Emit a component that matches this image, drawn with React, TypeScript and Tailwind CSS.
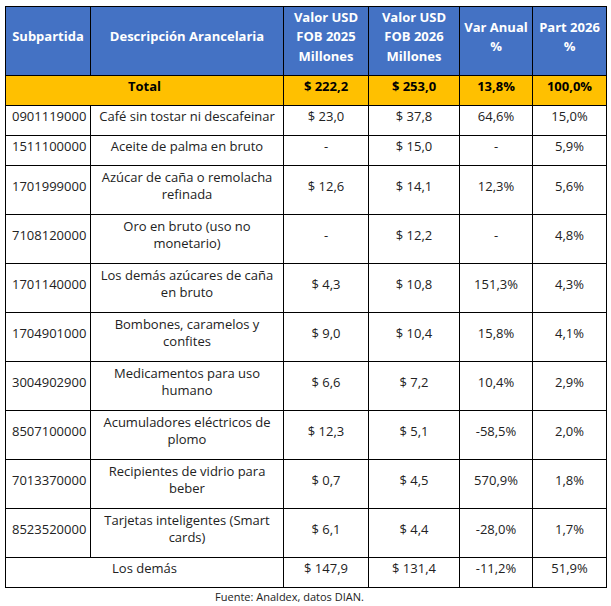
const rows: [string, string, string, string, string, string][] = [
  ['0901119000', 'Café sin tostar ni descafeinar', '$ 23,0', '$ 37,8', '64,6%', '15,0%'],
  ['1511100000', 'Aceite de palma en bruto', '-', '$ 15,0', '-', '5,9%'],
  ['1701999000', 'Azúcar de caña o remolacha refinada', '$ 12,6', '$ 14,1', '12,3%', '5,6%'],
  ['7108120000', 'Oro en bruto (uso no monetario)', '-', '$ 12,2', '-', '4,8%'],
  ['1701140000', 'Los demás azúcares de caña en bruto', '$ 4,3', '$ 10,8', '151,3%', '4,3%'],
  ['1704901000', 'Bombones, caramelos y confites', '$ 9,0', '$ 10,4', '15,8%', '4,1%'],
  ['3004902900', 'Medicamentos para uso humano', '$ 6,6', '$ 7,2', '10,4%', '2,9%'],
  ['8507100000', 'Acumuladores eléctricos de plomo', '$ 12,3', '$ 5,1', '-58,5%', '2,0%'],
  ['7013370000', 'Recipientes de vidrio para beber', '$ 0,7', '$ 4,5', '570,9%', '1,8%'],
  ['8523520000', 'Tarjetas inteligentes (Smart cards)', '$ 6,1', '$ 4,4', '-28,0%', '1,7%'],
];

// rows whose description wraps to two lines
const tall = new Set([2, 3, 4, 5, 6, 7, 8, 9]);

const th = 'border border-black px-1 pb-2 align-middle text-center font-bold leading-[19.5px]';
const td = 'border border-black px-1 pb-2 align-middle text-center leading-[17px]';

export default function App() {
  return (
    <div className="min-h-screen bg-white pl-[5px] pt-[6px] text-[13px] text-[#222]" style={{ fontFamily: '"Open Sans", "Liberation Sans", sans-serif' }}>
      <table className="w-[601px] table-fixed border-collapse">
        <colgroup>
          <col className="w-[85px]" />
          <col className="w-[193px]" />
          <col className="w-[85px]" />
          <col className="w-[91px]" />
          <col className="w-[73px]" />
          <col className="w-[74px]" />
        </colgroup>
        <thead>
          <tr className="h-[69px] bg-[#4472c4] text-white">
            <th className={th}>Subpartida</th>
            <th className={th}>Descripción Arancelaria</th>
            <th className={th}>Valor USD FOB 2025 Millones</th>
            <th className={th}>Valor USD FOB 2026 Millones</th>
            <th className={th}>Var Anual %</th>
            <th className={th}>Part 2026 %</th>
          </tr>
        </thead>
        <tbody>
          <tr className="h-[30px] bg-[#ffc000] font-bold text-black">
            <td className={td} colSpan={2}>Total</td>
            <td className={td}>$ 222,2</td>
            <td className={td}>$ 253,0</td>
            <td className={td}>13,8%</td>
            <td className={td}>100,0%</td>
          </tr>
          {rows.map((r, i) => (
            <tr key={r[0]} className={tall.has(i) ? 'h-[49px]' : 'h-[30px]'}>
              <td className={`${td} !text-left !px-[6px]`}>{r[0]}</td>
              <td className={td}>{r[1]}</td>
              <td className={td}>{r[2]}</td>
              <td className={td}>{r[3]}</td>
              <td className={td}>{r[4]}</td>
              <td className={td}>{r[5]}</td>
            </tr>
          ))}
          <tr className="h-[30px]">
            <td className={td} colSpan={2}>Los demás</td>
            <td className={td}>$ 147,9</td>
            <td className={td}>$ 131,4</td>
            <td className={td}>-11,2%</td>
            <td className={td}>51,9%</td>
          </tr>
        </tbody>
      </table>
      <p className="mt-[1px] w-[601px] pr-[32px] text-center text-[11px] leading-[15px] text-[#222]">
        Fuente: Analdex, datos DIAN.
      </p>
    </div>
  );
}
